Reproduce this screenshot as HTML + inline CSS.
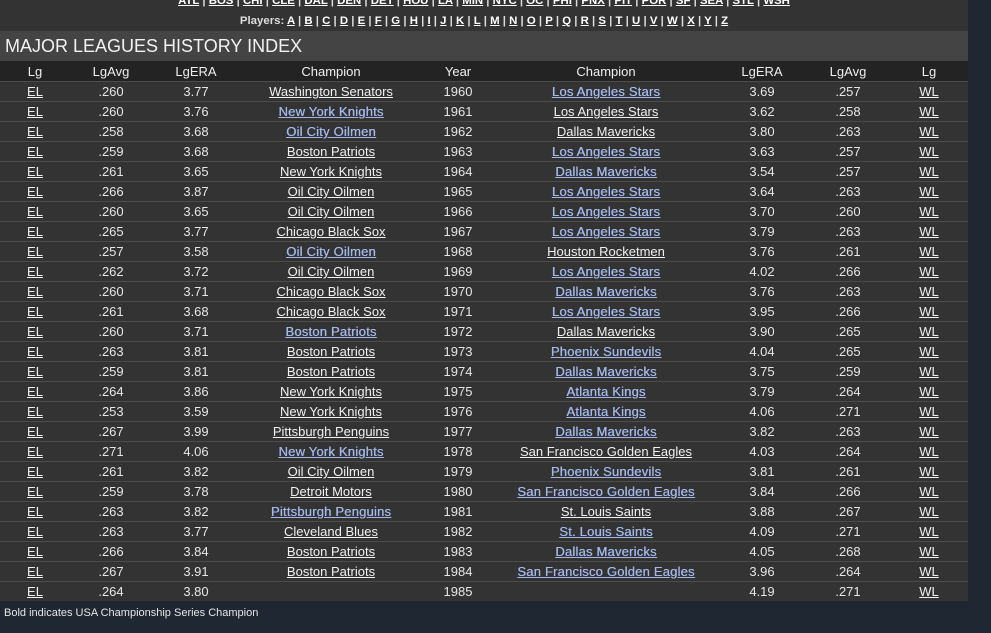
<!DOCTYPE html>
<html><head><meta charset="utf-8"><style>
body{margin:0;width:991px;height:633px;overflow:hidden;background:#1f2733;font-family:"Liberation Sans",sans-serif;color:#e6e6e6}
#p{position:absolute;left:0;top:0;width:968px;height:601px;background:#333}
.nav{position:absolute;left:0;width:968px;text-align:center;font-size:11.4px;font-weight:bold;color:#ddd}
.nav a{color:#fff;text-decoration:underline}
#n1{top:-5px}#n2{top:15px}
#t{position:absolute;left:0;top:31px;width:968px;height:30px;background:#444;font-size:18px;color:#f2f2f2;line-height:31px;padding-left:5px;box-sizing:border-box}
table{position:absolute;left:0;top:61px;width:968px;border-collapse:collapse;table-layout:fixed;font-size:13px}
th{background:#232323;font-weight:normal;height:20px;padding:0;color:#eee}
td{height:19px;padding:0;text-align:center;border-top:1px solid #4c4c4c;color:#e6e6e6}
td a{color:#f0f0f0;text-decoration:underline}
td a.b{color:#a3b8ea;letter-spacing:0.2px;text-shadow:0.3px 0 0 #a3b8ea}
#f{position:absolute;left:4px;top:607px;font-size:11px;color:#e6e6e6}
</style></head><body>
<div id="p">
<div class="nav" id="n1"><a>ATL</a> | <a>BOS</a> | <a>CHI</a> | <a>CLE</a> | <a>DAL</a> | <a>DEN</a> | <a>DET</a> | <a>HOU</a> | <a>LA</a> | <a>MIN</a> | <a>NYC</a> | <a>OC</a> | <a>PHI</a> | <a>PNX</a> | <a>PIT</a> | <a>POR</a> | <a>SF</a> | <a>SEA</a> | <a>STL</a> | <a>WSH</a></div>
<div class="nav" id="n2">Players: <a>A</a> | <a>B</a> | <a>C</a> | <a>D</a> | <a>E</a> | <a>F</a> | <a>G</a> | <a>H</a> | <a>I</a> | <a>J</a> | <a>K</a> | <a>L</a> | <a>M</a> | <a>N</a> | <a>O</a> | <a>P</a> | <a>Q</a> | <a>R</a> | <a>S</a> | <a>T</a> | <a>U</a> | <a>V</a> | <a>W</a> | <a>X</a> | <a>Y</a> | <a>Z</a></div>
<div id="t">MAJOR LEAGUES HISTORY INDEX</div>
<table>
<colgroup><col style="width:70px"><col style="width:82px"><col style="width:88px"><col style="width:182px"><col style="width:72px"><col style="width:224px"><col style="width:88px"><col style="width:84px"><col style="width:78px"></colgroup>
<tr><th>Lg</th><th>LgAvg</th><th>LgERA</th><th>Champion</th><th>Year</th><th>Champion</th><th>LgERA</th><th>LgAvg</th><th>Lg</th></tr>
<tr><td><a>EL</a></td><td>.260</td><td>3.77</td><td><a>Washington Senators</a></td><td>1960</td><td><a class="b">Los Angeles Stars</a></td><td>3.69</td><td>.257</td><td><a>WL</a></td></tr>
<tr><td><a>EL</a></td><td>.260</td><td>3.76</td><td><a class="b">New York Knights</a></td><td>1961</td><td><a>Los Angeles Stars</a></td><td>3.62</td><td>.258</td><td><a>WL</a></td></tr>
<tr><td><a>EL</a></td><td>.258</td><td>3.68</td><td><a class="b">Oil City Oilmen</a></td><td>1962</td><td><a>Dallas Mavericks</a></td><td>3.80</td><td>.263</td><td><a>WL</a></td></tr>
<tr><td><a>EL</a></td><td>.259</td><td>3.68</td><td><a>Boston Patriots</a></td><td>1963</td><td><a class="b">Los Angeles Stars</a></td><td>3.63</td><td>.257</td><td><a>WL</a></td></tr>
<tr><td><a>EL</a></td><td>.261</td><td>3.65</td><td><a>New York Knights</a></td><td>1964</td><td><a class="b">Dallas Mavericks</a></td><td>3.54</td><td>.257</td><td><a>WL</a></td></tr>
<tr><td><a>EL</a></td><td>.266</td><td>3.87</td><td><a>Oil City Oilmen</a></td><td>1965</td><td><a class="b">Los Angeles Stars</a></td><td>3.64</td><td>.263</td><td><a>WL</a></td></tr>
<tr><td><a>EL</a></td><td>.260</td><td>3.65</td><td><a>Oil City Oilmen</a></td><td>1966</td><td><a class="b">Los Angeles Stars</a></td><td>3.70</td><td>.260</td><td><a>WL</a></td></tr>
<tr><td><a>EL</a></td><td>.265</td><td>3.77</td><td><a>Chicago Black Sox</a></td><td>1967</td><td><a class="b">Los Angeles Stars</a></td><td>3.79</td><td>.263</td><td><a>WL</a></td></tr>
<tr><td><a>EL</a></td><td>.257</td><td>3.58</td><td><a class="b">Oil City Oilmen</a></td><td>1968</td><td><a>Houston Rocketmen</a></td><td>3.76</td><td>.261</td><td><a>WL</a></td></tr>
<tr><td><a>EL</a></td><td>.262</td><td>3.72</td><td><a>Oil City Oilmen</a></td><td>1969</td><td><a class="b">Los Angeles Stars</a></td><td>4.02</td><td>.266</td><td><a>WL</a></td></tr>
<tr><td><a>EL</a></td><td>.260</td><td>3.71</td><td><a>Chicago Black Sox</a></td><td>1970</td><td><a class="b">Dallas Mavericks</a></td><td>3.76</td><td>.263</td><td><a>WL</a></td></tr>
<tr><td><a>EL</a></td><td>.261</td><td>3.68</td><td><a>Chicago Black Sox</a></td><td>1971</td><td><a class="b">Los Angeles Stars</a></td><td>3.95</td><td>.266</td><td><a>WL</a></td></tr>
<tr><td><a>EL</a></td><td>.260</td><td>3.71</td><td><a class="b">Boston Patriots</a></td><td>1972</td><td><a>Dallas Mavericks</a></td><td>3.90</td><td>.265</td><td><a>WL</a></td></tr>
<tr><td><a>EL</a></td><td>.263</td><td>3.81</td><td><a>Boston Patriots</a></td><td>1973</td><td><a class="b">Phoenix Sundevils</a></td><td>4.04</td><td>.265</td><td><a>WL</a></td></tr>
<tr><td><a>EL</a></td><td>.259</td><td>3.81</td><td><a>Boston Patriots</a></td><td>1974</td><td><a class="b">Dallas Mavericks</a></td><td>3.75</td><td>.259</td><td><a>WL</a></td></tr>
<tr><td><a>EL</a></td><td>.264</td><td>3.86</td><td><a>New York Knights</a></td><td>1975</td><td><a class="b">Atlanta Kings</a></td><td>3.79</td><td>.264</td><td><a>WL</a></td></tr>
<tr><td><a>EL</a></td><td>.253</td><td>3.59</td><td><a>New York Knights</a></td><td>1976</td><td><a class="b">Atlanta Kings</a></td><td>4.06</td><td>.271</td><td><a>WL</a></td></tr>
<tr><td><a>EL</a></td><td>.267</td><td>3.99</td><td><a>Pittsburgh Penguins</a></td><td>1977</td><td><a class="b">Dallas Mavericks</a></td><td>3.82</td><td>.263</td><td><a>WL</a></td></tr>
<tr><td><a>EL</a></td><td>.271</td><td>4.06</td><td><a class="b">New York Knights</a></td><td>1978</td><td><a>San Francisco Golden Eagles</a></td><td>4.03</td><td>.264</td><td><a>WL</a></td></tr>
<tr><td><a>EL</a></td><td>.261</td><td>3.82</td><td><a>Oil City Oilmen</a></td><td>1979</td><td><a class="b">Phoenix Sundevils</a></td><td>3.81</td><td>.261</td><td><a>WL</a></td></tr>
<tr><td><a>EL</a></td><td>.259</td><td>3.78</td><td><a>Detroit Motors</a></td><td>1980</td><td><a class="b">San Francisco Golden Eagles</a></td><td>3.84</td><td>.266</td><td><a>WL</a></td></tr>
<tr><td><a>EL</a></td><td>.263</td><td>3.82</td><td><a class="b">Pittsburgh Penguins</a></td><td>1981</td><td><a>St. Louis Saints</a></td><td>3.88</td><td>.267</td><td><a>WL</a></td></tr>
<tr><td><a>EL</a></td><td>.263</td><td>3.77</td><td><a>Cleveland Blues</a></td><td>1982</td><td><a class="b">St. Louis Saints</a></td><td>4.09</td><td>.271</td><td><a>WL</a></td></tr>
<tr><td><a>EL</a></td><td>.266</td><td>3.84</td><td><a>Boston Patriots</a></td><td>1983</td><td><a class="b">Dallas Mavericks</a></td><td>4.05</td><td>.268</td><td><a>WL</a></td></tr>
<tr><td><a>EL</a></td><td>.267</td><td>3.91</td><td><a>Boston Patriots</a></td><td>1984</td><td><a class="b">San Francisco Golden Eagles</a></td><td>3.96</td><td>.264</td><td><a>WL</a></td></tr>
<tr><td><a>EL</a></td><td>.264</td><td>3.80</td><td></td><td>1985</td><td></td><td>4.19</td><td>.271</td><td><a>WL</a></td></tr>
</table>
</div>
<div id="f">Bold indicates USA Championship Series Champion</div>
</body></html>
